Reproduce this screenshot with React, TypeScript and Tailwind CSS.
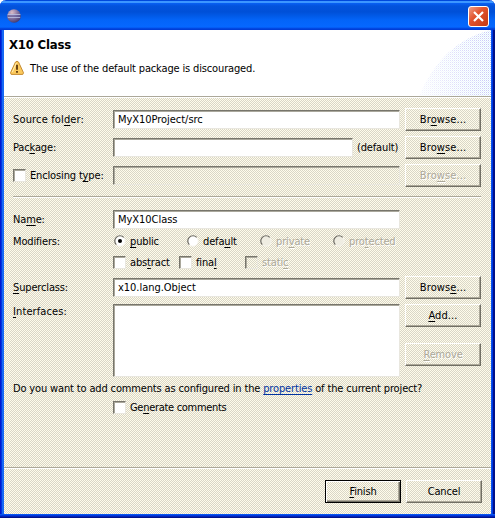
import type { ReactNode } from "react";

// Dithered beige: a one-pixel checkerboard of a lighter and a darker tone.
const FACE =
  "bg-[#ece9d8] bg-[conic-gradient(#d9d6c7_0_25%,#fffceb_0_50%,#d9d6c7_0_75%,#fffceb_0)] bg-[size:2px_2px]";
const SUNKEN =
  "border border-t-[#77756b] border-l-[#77756b] border-r-[#e9e7df] border-b-[#e9e7df] shadow-[inset_1px_1px_0_#aaa89c]";

/** Text with an underlined mnemonic, marked by & before the letter. */
function T({ t, dim, className = "" }: { t: string; dim?: boolean; className?: string }) {
  const i = t.indexOf("&");
  return (
    <span className={`whitespace-nowrap ${dim ? "text-[#aca899] [text-shadow:1px_1px_0_#fff]" : ""} ${className}`}>
      {i < 0 ? t : (
        <>
          {t.slice(0, i)}
          <span className="underline decoration-1 underline-offset-[2px] [text-decoration-skip-ink:none]">{t[i + 1]}</span>
          {t.slice(i + 2)}
        </>
      )}
    </span>
  );
}

function Button({ t, dim, primary }: { t: string; dim?: boolean; primary?: boolean }) {
  return (
    <button
      className={`flex h-[23px] w-[76px] shrink-0 items-center justify-center ${FACE} ${
        primary
          ? "border border-black shadow-[inset_1px_1px_0_#fff,inset_-1px_-1px_0_#716f64,inset_-2px_-2px_0_#aca899]"
          : "border border-t-white border-l-white border-r-[#716f64] border-b-[#716f64] shadow-[inset_-1px_-1px_0_#aca899]"
      }`}
    >
      <T t={t} dim={dim} className={t.endsWith("...") ? "tracking-[0.1px]" : ""} />
    </button>
  );
}

function Field({ value = "", disabled, className = "" }: { value?: string; disabled?: boolean; className?: string }) {
  return (
    <div className={`flex h-[19px] shrink-0 items-center pl-[4px] ${SUNKEN} ${disabled ? FACE : "bg-white"} ${className}`}>
      <T t={value} className="tracking-[-0.04px]" />
    </div>
  );
}

function Box({ dim }: { dim?: boolean }) {
  return <span className={`size-[13px] shrink-0 ${SUNKEN} ${dim ? FACE : "bg-white"}`} />;
}

function Radio({ on, dim }: { on?: boolean; dim?: boolean }) {
  return (
    <svg width="12" height="12" viewBox="0 0 12 12" className="shrink-0">
      <circle cx="6" cy="6" r="5.2" fill={dim ? "#efede2" : "#fff"} stroke="#f7f5ed" />
      <path d="M2.3 9.7A5.2 5.2 0 0 1 9.7 2.3" fill="none" stroke="#68665e" strokeWidth="1.2" />
      {on && <circle cx="6" cy="6" r="2" fill="#000" />}
    </svg>
  );
}

function Row({ label, children, className }: { label: ReactNode; children?: ReactNode; className: string }) {
  return (
    <div className={`flex items-center ${className}`}>
      <div className="flex w-[100px] shrink-0 items-center">{label}</div>
      {children}
    </div>
  );
}

function Option({ t, on, dim, className }: { t: string; on?: boolean; dim?: boolean; className: string }) {
  return (
    <label className={`flex shrink-0 items-center gap-1 ${className}`}>
      <Radio on={on} dim={dim} />
      <T t={t} dim={dim} />
    </label>
  );
}

function Check({ t, dim, className = "" }: { t: string; dim?: boolean; className?: string }) {
  return (
    <label className={`flex shrink-0 items-center gap-1 ${className}`}>
      <Box dim={dim} />
      <T t={t} dim={dim} />
    </label>
  );
}

function EclipseIcon() {
  return (
    <svg width="14" height="14" viewBox="0 0 14 14">
      <defs>
        <radialGradient id="orb" cx=".35" cy=".25" r=".8">
          <stop offset="0" stopColor="#d9bcc8" />
          <stop offset=".5" stopColor="#8878a4" />
          <stop offset="1" stopColor="#40366c" />
        </radialGradient>
      </defs>
      <circle cx="7" cy="7" r="6.8" fill="url(#orb)" />
      <path d="M.6 5.5h12.8M.8 8.5h12.4" stroke="#b9c1e4" strokeWidth=".8" />
      <path d="M1 7h12" stroke="#55549a" />
    </svg>
  );
}

function WarningIcon() {
  return (
    <svg width="16" height="16" viewBox="0 0 16 16">
      <path d="M8 1.2 9.5 2 14.5 12.8 13.8 14.4H2.2L1.5 12.8 6.5 2Z" fill="#fbc95d" stroke="#c58b32" strokeLinejoin="round" />
      <path d="M7.3 3 3.3 12.2" stroke="#fff0b5" />
      <path d="M8 4.8v5" stroke="#59340c" strokeWidth="1.8" />
      <path d="M8 11v1.8" stroke="#59340c" strokeWidth="1.8" />
    </svg>
  );
}

export default function App() {
  return (
    <div className="h-[518px] w-[495px] overflow-hidden bg-white font-['DejaVu_Sans_Condensed','DejaVu_Sans',sans-serif] text-[11px] leading-[13px] tracking-[-0.15px] text-black [font-stretch:condensed]">
      <div className="flex h-full flex-col overflow-hidden rounded-t-[6px] bg-[linear-gradient(90deg,#0019cf_0_1px,#0036e0_1px_2px,#1668f4_2px_4px,transparent_4px_491px,#0855ee_491px_492px,#0036e0_492px_493px,#00118a_493px)]">
        <div className="flex h-[30px] shrink-0 items-center justify-between bg-[linear-gradient(#0048dc_0_1px,#3c96ff_1px_3px,#0860f5_3px,#0353dc_6px,#0050d8_12px,#0364f8_20px,#0668ff_27px,#003dd7_29px)] pr-[6px] pl-[7px] pt-[2px]">
          <EclipseIcon />
          <button className="flex size-[21px] items-center justify-center rounded-[3px] border border-white bg-[linear-gradient(135deg,#ef9e87,#e2542f_40%,#c33a13)]">
            <svg width="13" height="13" viewBox="0 0 13 13">
              <path d="m2 2 9 9M11 2l-9 9" stroke="#fff" strokeWidth="2.2" />
            </svg>
          </button>
        </div>

        <div className="mx-1 flex h-[67px] shrink-0 justify-between border-b border-[#aca899] bg-white pl-[5px]">
          <div className="pt-[7px]">
            <h1 className="text-[13px] leading-[16px] font-bold tracking-[-0.2px]">X10 Class</h1>
            <div className="mt-[7px] flex items-center gap-[5px]">
              <WarningIcon />
              <T t="The use of the default package is discouraged." />
            </div>
          </div>
          <svg width="73" height="66" viewBox="0 0 73 66">
            <defs>
              <pattern id="dots" width="2" height="2" patternUnits="userSpaceOnUse">
                <rect width="1" height="1" fill="#c4c8f8" />
                <rect x="1" y="1" width="1" height="1" fill="#dff2ff" />
              </pattern>
              <linearGradient id="fade">
                <stop stopColor="#fff" stopOpacity=".15" />
                <stop offset="1" stopColor="#fff" />
              </linearGradient>
              <mask id="fading"><rect width="73" height="66" fill="url(#fade)" /></mask>
            </defs>
            <path d="M1 66Q24 12 73 0V66Z" fill="url(#dots)" mask="url(#fading)" />
          </svg>
        </div>

        <div className={`mx-1 mb-1 flex min-h-0 flex-1 flex-col border-t border-white ${FACE}`}>
          <div className="flex flex-col pt-[10px] pl-[9px]">
            <Row className="h-[23px]" label={<T className="tracking-[0.15px]" t="Source fol&der:" />}>
              <Field className="mr-[5px] w-[287px]" value="MyX10Project/src" />
              <Button t="Br&owse..." />
            </Row>
            <Row className="mt-[5px] h-[23px]" label={<T t="Pac&kage:" />}>
              <Field className="w-[240px]" />
              <T className="w-[52px] pl-[4px]" t="(default)" />
              <Button t="Bro&wse..." />
            </Row>
            <Row
              className="mt-[5px] h-[23px]"
              label={<Check t="Enclosing t&ype:" />}
            >
              <Field disabled className="mr-[5px] w-[287px]" />
              <Button dim t="Bro&wse..." />
            </Row>
            <hr className="mt-[9px] w-[468px] border-t border-b border-t-[#aca899] border-b-white" />
            <Row className="mt-[12px] h-[19px]" label={<T t="Na&me:" />}>
              <Field className="w-[287px]" value="MyX10Class" />
            </Row>
            <Row className="mt-[5px] h-[14px]" label={<T t="Modifiers:" />}>
              <Option on className="w-[73px] pl-px" t="&public" />
              <Option className="w-[73px] pl-px" t="defa&ult" />
              <Option dim className="w-[73px] pl-px" t="pri&vate" />
              <Option dim className="w-[73px] pl-px" t="pro&tected" />
            </Row>
            <Row className="mt-[7px] h-[14px]" label={null}>
              <Check className="w-[66px]" t="abs&tract" />
              <Check className="w-[66px]" t="fina&l" />
              <Check dim t="stati&c" />
            </Row>
            <Row className="mt-[7px] h-[23px]" label={<T t="&Superclass:" />}>
              <Field className="mr-[5px] w-[287px]" value="x10.lang.Object" />
              <Button t="Brows&e..." />
            </Row>
            <div className="mt-[5px] flex h-[73px]">
              <T className="w-[100px] pt-[1px] tracking-[0.1px]" t="&Interfaces:" />
              <div className={`mr-[5px] h-[73px] w-[287px] bg-white ${SUNKEN}`} />
              <div className="flex flex-col gap-[16px]">
                <Button t="&Add..." />
                <Button dim t="&Remove" />
              </div>
            </div>
            <p className="mt-[5px] whitespace-nowrap">
              Do you want to add comments as configured in the{" "}
              <a className="text-[#0033a0] underline underline-offset-[2px] [text-decoration-skip-ink:none]">properties</a> of the current project?
            </p>
            <Check className="mt-[6px] ml-[100px] tracking-[-0.3px]" t="Ge&nerate comments" />
          </div>
          <div className="mt-auto flex h-[47px] shrink-0 items-start justify-end gap-[5px] border-t border-[#aca899] pt-[12px] pr-[9px] shadow-[inset_0_1px_0_#fff]">
            <Button primary t="&Finish" />
            <Button t="Cancel" />
          </div>
        </div>
        <div className="-mt-1 h-1 shrink-0 bg-[linear-gradient(#0855ee_0_1px,#0036e0_1px_2px,#00118a_3px)]" />
      </div>
    </div>
  );
}
